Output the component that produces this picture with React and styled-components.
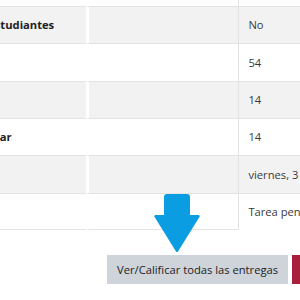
import React from "react";
import styled, { createGlobalStyle } from "styled-components";

const Global = createGlobalStyle`
  html, body { margin: 0; padding: 0; background: #fff; }
  body { font-family: "Open Sans", "Noto Sans", "Liberation Sans", sans-serif; }
`;

const Page = styled.div`
  position: relative;
  width: 300px;
  height: 300px;
  overflow: hidden;
  background: #fff;
`;

const TableWrap = styled.div`
  margin-left: -71px;
`;

const Table = styled.table`
  table-layout: fixed;
  width: 550px;
  border-collapse: separate;
  border-spacing: 0;
  font-size: 11.2px;
  line-height: 1.5;
  color: #373a3c;
`;

const Row = styled.tr`
  height: ${(p) => (p.$partial ? "6px" : "37.33px")};
  background: ${(p) => (p.$striped ? "#f2f2f2" : "#fff")};
`;

const Label = styled.th`
  box-sizing: border-box;
  width: 157px;
  padding: 1px 9.4px 0;
  text-align: left;
  font-weight: 700;
  color: #1d2125;
  white-space: nowrap;
  overflow: hidden;
  border-top: ${(p) => (p.$partial ? "none" : "1px solid #e3e3e3")};
  border-bottom: ${(p) => (p.$last ? "1px solid #e3e3e3" : "none")};
`;

const Spacer = styled.td`
  box-sizing: border-box;
  width: 152px;
  padding: 0;
  border-left: 3px solid #fff;
  border-top: ${(p) => (p.$partial ? "none" : "1px solid #e3e3e3")};
  border-bottom: ${(p) => (p.$last ? "1px solid #e3e3e3" : "none")};
`;

const Value = styled.td`
  box-sizing: border-box;
  padding: 1px 9.4px 0;
  white-space: nowrap;
  overflow: hidden;
  border-left: 1px solid #e3e3e3;
  border-top: ${(p) => (p.$partial ? "none" : "1px solid #e3e3e3")};
`;

const ButtonRow = styled.div`
  display: flex;
  gap: 4px;
  margin-top: 25px;
  padding-left: 107px;
  white-space: nowrap;
`;

const Button = styled.button`
  flex: none;
  height: 29px;
  padding: 0 10px;
  border: none;
  border-radius: 0;
  font-family: inherit;
  font-size: 11.2px;
  color: ${(p) => (p.$primary ? "#fff" : "#1d2125")};
  background: ${(p) => (p.$primary ? "#a81e3d" : "#ced4da")};
`;

const Arrow = styled.svg`
  position: absolute;
  left: 153px;
  top: 193px;
  width: 48px;
  height: 60px;
`;

const rows = [
  { label: "Oculto a estudiantes", value: "No" },
  { label: "Inscritos", value: "54" },
  { label: "Enviados", value: "14" },
  { label: "Para calificar", value: "14" },
  { label: "Vence", value: "viernes, 3 de septiembre de 2021, 00:00" },
  { label: "Restante", value: "Tarea pendiente" },
];

export default function App() {
  return (
    <Page>
      <Global />
      <TableWrap>
        <Table>
          <tbody>
            <Row $partial>
              <Label $partial />
              <Spacer $partial />
              <Value $partial />
            </Row>
            {rows.map((r, i) => {
              const last = i === rows.length - 1;
              return (
                <Row key={r.label} $striped={i % 2 === 0}>
                  <Label $last={last}>{r.label}</Label>
                  <Spacer $last={last} />
                  <Value>{r.value}</Value>
                </Row>
              );
            })}
          </tbody>
        </Table>
      </TableWrap>
      <ButtonRow>
        <Button>Ver/Calificar todas las entregas</Button>
        <Button $primary>Calificar</Button>
      </ButtonRow>
      <Arrow viewBox="0 0 48 60">
        <path
          fill="#0b9de2"
          d="M14 1 H34 A3 3 0 0 1 37 4 V22 H45.5 A1.2 1.2 0 0 1 46.4 24 L25 58.5 A1.3 1.3 0 0 1 23 58.5 L1.6 24 A1.2 1.2 0 0 1 2.5 22 H11 V4 A3 3 0 0 1 14 1 Z"
        />
      </Arrow>
    </Page>
  );
}
